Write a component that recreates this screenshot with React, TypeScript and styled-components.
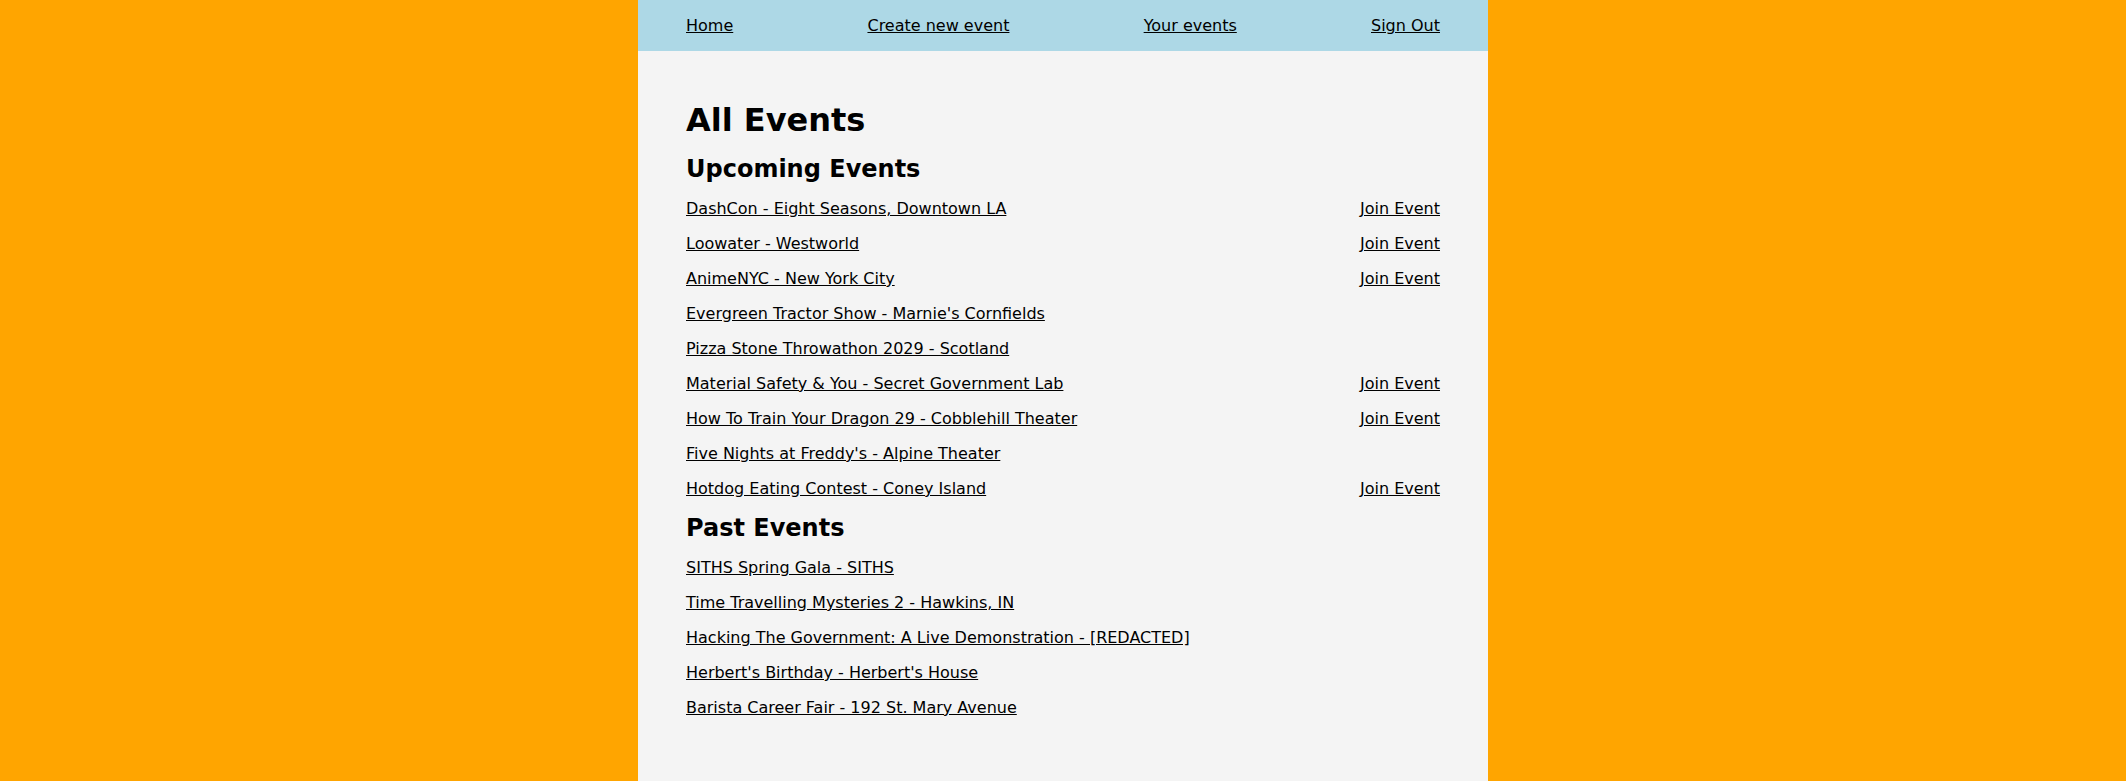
import styled, { createGlobalStyle } from 'styled-components';

const GlobalStyle = createGlobalStyle`
  html, body {
    margin: 0;
    padding: 0;
    background: orange;
    font-family: "DejaVu Sans", Verdana, sans-serif;
    color: #000;
  }
`;

const Page = styled.div`
  width: 850px;
  min-height: 100vh;
  margin: 0 auto;
  background: #f4f4f4;
`;

const Nav = styled.nav`
  display: flex;
  justify-content: space-between;
  padding: 16px 48px;
  background: lightblue;
`;

const Link = styled.a`
  color: #000;
  font-size: 16px;
  text-decoration: underline;
  cursor: pointer;
`;

const Main = styled.main`
  display: flex;
  flex-direction: column;
  gap: 16px;
  padding: 50px 48px 48px;
`;

const Title = styled.h1`
  margin: 0;
  font-size: 32px;
  font-weight: bold;
`;

const Section = styled.h2`
  margin: 0;
  font-size: 24px;
  font-weight: bold;
`;

const Row = styled.div`
  display: flex;
  justify-content: space-between;
  align-items: baseline;
`;

const upcoming = [
  { name: 'DashCon - Eight Seasons, Downtown LA', join: true },
  { name: 'Loowater - Westworld', join: true },
  { name: 'AnimeNYC - New York City', join: true },
  { name: "Evergreen Tractor Show - Marnie's Cornfields", join: false },
  { name: 'Pizza Stone Throwathon 2029 - Scotland', join: false },
  { name: 'Material Safety & You - Secret Government Lab', join: true },
  { name: 'How To Train Your Dragon 29 - Cobblehill Theater', join: true },
  { name: "Five Nights at Freddy's - Alpine Theater", join: false },
  { name: 'Hotdog Eating Contest - Coney Island', join: true },
];

const past = [
  'SITHS Spring Gala - SITHS',
  'Time Travelling Mysteries 2 - Hawkins, IN',
  'Hacking The Government: A Live Demonstration - [REDACTED]',
  "Herbert's Birthday - Herbert's House",
  'Barista Career Fair - 192 St. Mary Avenue',
];

export default function App() {
  return (
    <>
      <GlobalStyle />
      <Page>
        <Nav>
          <Link>Home</Link>
          <Link>Create new event</Link>
          <Link>Your events</Link>
          <Link>Sign Out</Link>
        </Nav>
        <Main>
          <Title>All Events</Title>
          <Section>Upcoming Events</Section>
          {upcoming.map((ev) => (
            <Row key={ev.name}>
              <Link>{ev.name}</Link>
              {ev.join && <Link>Join Event</Link>}
            </Row>
          ))}
          <Section>Past Events</Section>
          {past.map((name) => (
            <Row key={name}>
              <Link>{name}</Link>
            </Row>
          ))}
        </Main>
      </Page>
    </>
  );
}
